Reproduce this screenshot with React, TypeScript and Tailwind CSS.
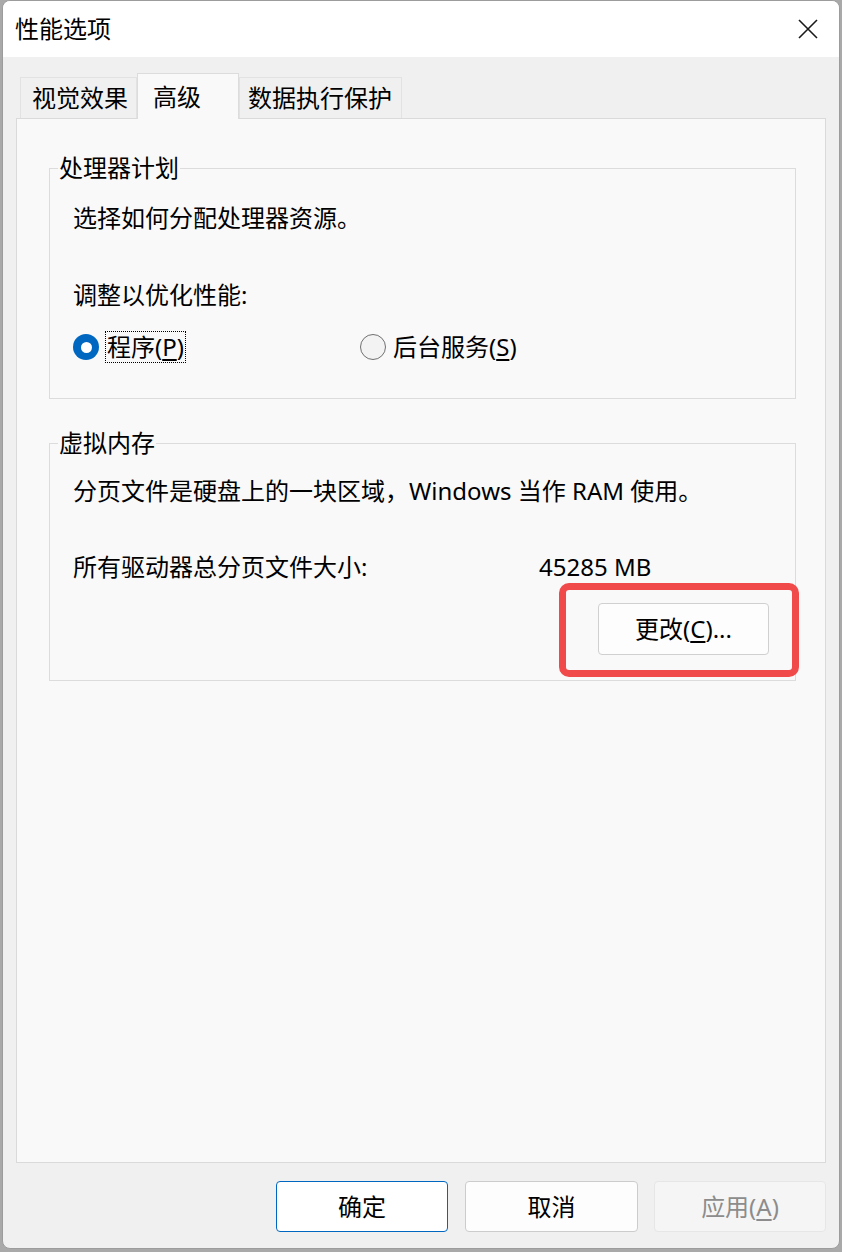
import React from "react";

const font = "font-['Noto_Sans','Noto_Sans_CJK_SC',sans-serif]";

function Radio({ checked }: { checked?: boolean }) {
  if (checked) {
    return (
      <span className="flex h-[26px] w-[26px] shrink-0 items-center justify-center rounded-full bg-[#0067c0]">
        <span className="h-[11px] w-[11px] rounded-full bg-white" />
      </span>
    );
  }
  return <span className="h-[26px] w-[26px] shrink-0 rounded-full border-[1.5px] border-[#707070] bg-[#f3f3f3]" />;
}

function GroupBox({ title, className, children }: { title: string; className?: string; children: React.ReactNode }) {
  return (
    <fieldset className={"border border-[#dcdcdc] " + (className ?? "")}>
      <legend className="ml-[8px] px-px leading-[24px]">{title}</legend>
      <div className="pl-[23px]">{children}</div>
    </fieldset>
  );
}

export default function App() {
  return (
    <div className={`h-[1252px] w-[842px] bg-[#a9a9a9] pl-[2px] text-[24px] text-black ${font}`}>
      <div className="flex h-[1249px] w-[838px] flex-col overflow-hidden rounded-[8px] border border-[#9c9c9c] bg-[#f0f0f0]">
        {/* title bar */}
        <div className="flex h-[56px] items-center justify-between bg-white pl-[12px] pr-[21px]">
          <span className="leading-[24px]">性能选项</span>
          <svg width="20" height="20" viewBox="0 0 20 20" className="text-[#1a1a1a]">
            <path d="M1 1L19 19M19 1L1 19" stroke="currentColor" strokeWidth="1.6" fill="none" />
          </svg>
        </div>

        <div className="mx-[13px] mt-[16px] flex flex-1 flex-col">
          {/* tabs */}
          <div className="flex items-end pl-[4px]">
            <div className="flex h-[41px] w-[117px] items-center border border-b-0 border-[#e2e2e2] bg-[#f0f0f0] pl-[11px]">视觉效果</div>
            <div className="relative z-10 -mb-px flex h-[46px] w-[102px] items-center border border-b-0 border-[#dcdcdc] bg-[#f9f9f9] pl-[15px]">高级</div>
            <div className="flex h-[41px] w-[163px] items-center border border-b-0 border-[#e2e2e2] bg-[#f0f0f0] pl-[8px]">数据执行保护</div>
          </div>

          {/* tab panel */}
          <div className="flex-1 border border-[#dadada] bg-[#f9f9f9] pl-[32px] pr-[29px]">
            <GroupBox title="处理器计划" className="mt-[37px] pb-[35px] pt-[26px]">
              <p className="leading-[24px]">选择如何分配处理器资源。</p>
              <p className="mt-[53px] leading-[24px]">调整以优化性能:</p>
              <div className="mt-[24px] flex h-[32px] items-center">
                <div className="flex w-[287px] items-center gap-[6px]">
                  <Radio checked />
                  <span className="border border-dotted border-black px-px leading-[30px]">
                    程序(<span className="underline underline-offset-[3px]">P</span>)
                  </span>
                </div>
                <div className="flex items-center gap-[7px]">
                  <Radio />
                  <span className="leading-[30px]">
                    后台服务(<span className="underline underline-offset-[3px]">S</span>)
                  </span>
                </div>
              </div>
            </GroupBox>

            <GroupBox title="虚拟内存" className="mt-[32px] pb-[25px] pt-[24px]">
              <p className="leading-[24px]">分页文件是硬盘上的一块区域，Windows 当作 RAM 使用。</p>
              <div className="mt-[52px] flex leading-[24px]">
                <span className="w-[466px]">所有驱动器总分页文件大小:</span>
                <span>45285 MB</span>
              </div>
              <div className="mt-[24px] flex justify-end pr-[26px]">
                <div className="relative">
                  <button className="flex h-[52px] w-[171px] items-center justify-center rounded-[4px] border border-[#d0d0d0] bg-[#fdfdfd]">
                    更改(<span className="underline underline-offset-[3px]">C</span>)...
                  </button>
                  <div className="pointer-events-none absolute -bottom-[22px] -left-[39px] -right-[30px] -top-[20px] rounded-[10px] border-[7px] border-[#f04a4a]" />
                </div>
              </div>
            </GroupBox>
          </div>

          {/* dialog buttons */}
          <div className="mb-[16px] mt-[18px] flex justify-end">
            <button className="mr-[17px] h-[51px] w-[172px] rounded-[4px] border border-[#0067c0] bg-white">确定</button>
            <button className="mr-[16px] h-[51px] w-[173px] rounded-[4px] border border-[#cccccc] bg-[#fdfdfd]">取消</button>
            <button className="h-[51px] w-[172px] rounded-[4px] border border-[#e6e6e6] bg-[#f5f5f5] text-[#8c8c8c]">
              应用(<span className="underline underline-offset-[3px]">A</span>)
            </button>
          </div>
        </div>
      </div>
    </div>
  );
}
